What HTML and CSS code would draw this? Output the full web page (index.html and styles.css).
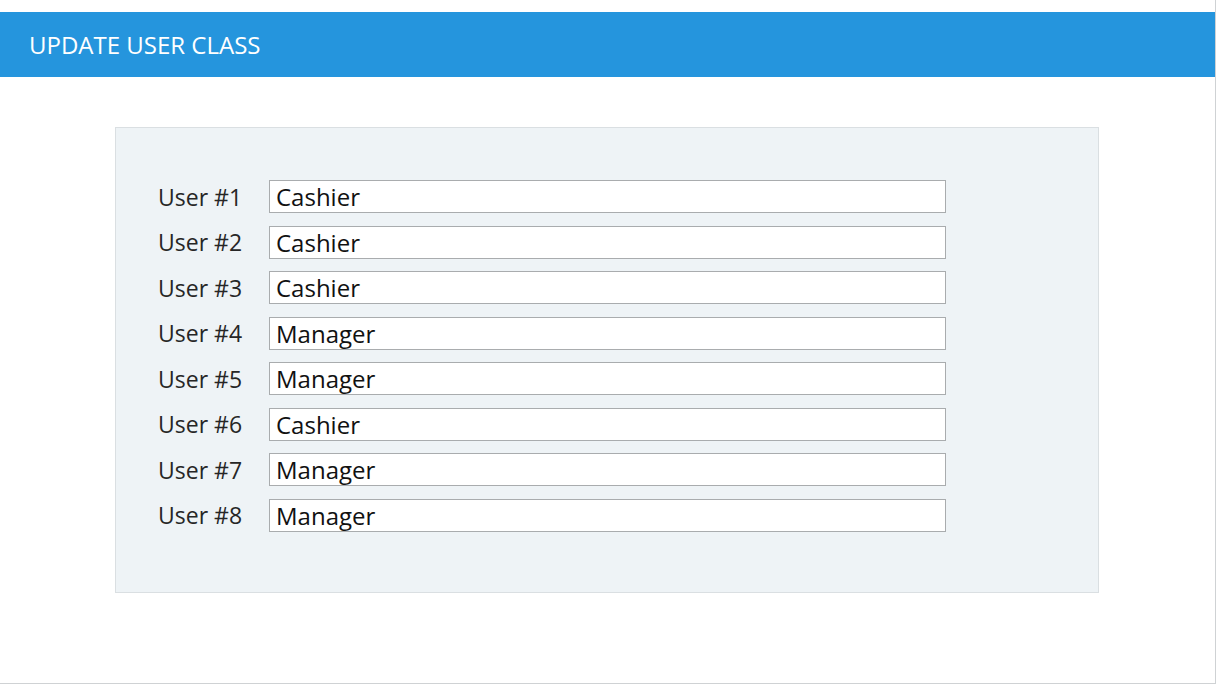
FILE: index.html
```html
<!DOCTYPE html>
<html>
<head>
<meta charset="utf-8">
<link rel="stylesheet" href="styles.css">
</head>
<body>
<div class="page">
  <header class="topbar"><h1 class="title">UPDATE USER CLASS</h1></header>
  <main class="content">
    <section class="panel">
      <div class="rows">
        <div class="row"><label class="label">User #1</label><div class="field">Cashier</div></div>
        <div class="row"><label class="label">User #2</label><div class="field">Cashier</div></div>
        <div class="row"><label class="label">User #3</label><div class="field">Cashier</div></div>
        <div class="row"><label class="label">User #4</label><div class="field">Manager</div></div>
        <div class="row"><label class="label">User #5</label><div class="field">Manager</div></div>
        <div class="row"><label class="label">User #6</label><div class="field">Cashier</div></div>
        <div class="row"><label class="label">User #7</label><div class="field">Manager</div></div>
        <div class="row"><label class="label">User #8</label><div class="field">Manager</div></div>
      </div>
    </section>
  </main>
</div>
</body>
</html>
```
FILE: styles.css
```css
html, body {
  margin: 0;
  padding: 0;
  background: #ffffff;
}
.page {
  box-sizing: border-box;
  width: 1216px;
  height: 684px;
  border-right: 1px solid #cfd2d4;
  border-bottom: 1px solid #cfd2d4;
  padding-top: 12px;
  font-family: "Open Sans", "Noto Sans", sans-serif;
  overflow: hidden;
}
.topbar {
  height: 65px;
  background: #2595dd;
  display: flex;
  align-items: center;
  padding-left: 29px;
}
.title {
  margin: 0;
  color: #ffffff;
  font-weight: 400;
  font-size: 24px;
  letter-spacing: 0;
}
.content {
  padding: 50px 0 0 115px;
}
.panel {
  box-sizing: border-box;
  width: 984px;
  height: 466px;
  background: #eef3f6;
  border: 1px solid #dadfe2;
  padding: 52px 0 0 42px;
}
.rows {
  display: flex;
  flex-direction: column;
  gap: 12.57px;
}
.row {
  display: flex;
  align-items: center;
}
.label {
  width: 111px;
  flex: none;
  font-size: 23px;
  color: #262626;
}
.field {
  box-sizing: border-box;
  width: 677px;
  height: 33px;
  background: #ffffff;
  border: 1px solid #a9acae;
  padding-left: 6px;
  font-size: 24px;
  line-height: 33px;
  color: #111111;
  display: flex;
  align-items: center;
}
```
